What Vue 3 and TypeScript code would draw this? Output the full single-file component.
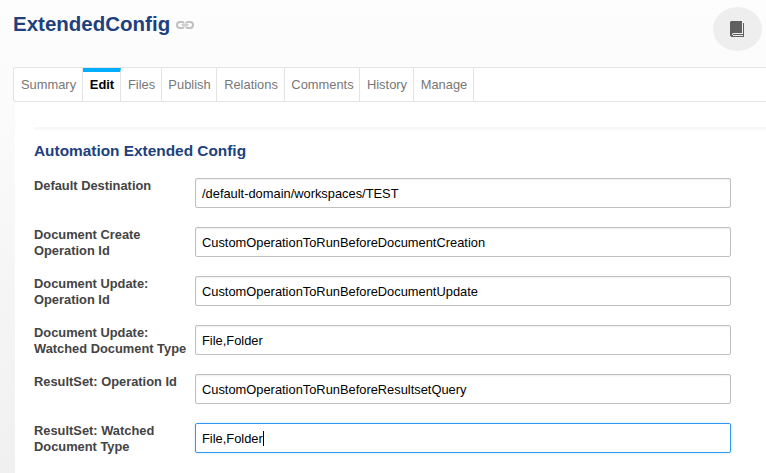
<script setup lang="ts">
import { onMounted, ref } from 'vue'

interface Tab {
  label: string
  width: number
}

interface Field {
  id: string
  lines: string[]
  value: string
}

const activeTab = ref('Edit')
const focused = ref('resultset-type')

const tabs: Tab[] = [
  { label: 'Summary', width: 69 },
  { label: 'Edit', width: 38 },
  { label: 'Files', width: 41 },
  { label: 'Publish', width: 55 },
  { label: 'Relations', width: 68 },
  { label: 'Comments', width: 75 },
  { label: 'History', width: 54 },
  { label: 'Manage', width: 60 },
]

const fields = ref<Field[]>([
  { id: 'destination', lines: ['Default Destination'], value: '/default-domain/workspaces/TEST' },
  { id: 'create-op', lines: ['Document Create', 'Operation Id'], value: 'CustomOperationToRunBeforeDocumentCreation' },
  { id: 'update-op', lines: ['Document Update:', 'Operation Id'], value: 'CustomOperationToRunBeforeDocumentUpdate' },
  { id: 'update-type', lines: ['Document Update:', 'Watched Document Type'], value: 'File,Folder' },
  { id: 'resultset-op', lines: ['ResultSet: Operation Id'], value: 'CustomOperationToRunBeforeResultsetQuery' },
  { id: 'resultset-type', lines: ['ResultSet: Watched', 'Document Type'], value: 'File,Folder' },
])

const ready = ref(false)
onMounted(() => {
  ready.value = true
})
</script>

<template>
  <div class="page">
    <header class="header">
      <h1 class="title">ExtendedConfig</h1>
      <svg class="link" width="18" height="8" viewBox="0 0 18 8" fill="none" stroke="#c0c0c0" stroke-width="2">
        <path d="M8 2.500C7.700 1.500 7 1 6 1H4C2 1 1 2.200 1 4s1 3 3 3h2c1 0 1.700-.5 2-1.500" />
        <path d="M10 2.500C10.300 1.500 11 1 12 1h2c2 0 3 1.200 3 3s-1 3-3 3h-2c-1 0-1.700-.5-2-1.500" />
        <path stroke-width="1.500" d="M5.500 4h7" />
      </svg>
      <button class="book" type="button" aria-label="Collections">
        <svg width="14" height="16" viewBox="0 0 14 16">
          <path fill="#606060" d="M1 0h11v12H2.500v2H12v-1h1V2h1v14H1.500L0 14.500V1z" />
          <path fill="#eee" d="M3 12h9v1H3zM2 13h1v1H2zM3 14h10v1H3z" />
          <path fill="#606060" d="M3 13h9v1H3z" />
        </svg>
      </button>
    </header>

    <nav class="tabs">
      <a
        v-for="tab in tabs"
        :key="tab.label"
        class="tab"
        :class="{ active: tab.label === activeTab }"
        :style="{ width: tab.width + 'px' }"
        @click="activeTab = tab.label"
      >{{ tab.label }}</a>
    </nav>

    <main class="content">
      <section class="panel">
        <h2 class="heading">Automation Extended Config</h2>
        <div v-for="field in fields" :key="field.id" class="row">
          <label class="label" :for="field.id">
            <span v-for="line in field.lines" :key="line">{{ line }}</span>
          </label>
          <div :id="field.id" class="input" :class="{ focus: field.id === focused }" @click="focused = field.id">
            <span>{{ field.value }}</span><i v-if="ready && field.id === focused" class="caret"></i>
          </div>
        </div>
      </section>
    </main>
  </div>
</template>

<style>
body {
  margin: 0;
  overflow: hidden;
}
</style>

<style scoped>
.page {
  box-sizing: border-box;
  display: flex;
  flex-direction: column;
  height: 473px;
  overflow: hidden;
  background: linear-gradient(#fdfdfd 0, #fbfbfb 100px, #f0f0f0 473px);
  font-family: "Liberation Sans", Arial, sans-serif;
  font-size: 13px;
}

.header {
  box-sizing: border-box;
  display: flex;
  align-items: flex-start;
  flex: none;
  height: 67px;
  padding: 7px 4px 0 13px;
}

.title {
  margin: 5px 0 0;
  color: #213f7d;
  font-size: 20.5px;
  line-height: 24px;
}

.link {
  margin: 14px 0 0 6px;
}

.book {
  display: flex;
  align-items: center;
  justify-content: center;
  width: 49px;
  height: 44px;
  margin-left: auto;
  padding: 0 2px 0 0;
  border: 0;
  border-radius: 50%;
  background: #eee;
}

.tabs {
  box-sizing: border-box;
  display: flex;
  flex: none;
  height: 35px;
  margin-left: 13px;
  border: 1px solid #e4e4e4;
  border-right: 0;
  border-radius: 3px 0 0 3px;
  background: #fff;
}

.tab {
  box-sizing: border-box;
  flex: none;
  padding-left: 1px;
  border-right: 1px solid #e4e4e4;
  color: #777;
  font-size: 12.9px;
  line-height: 34px;
  text-align: center;
  cursor: pointer;
}

.tab.active {
  border-top: 4px solid #00adff;
  color: #000;
  font-weight: bold;
  line-height: 26px;
}

.content {
  box-sizing: border-box;
  flex: 1;
  margin-left: 15px;
  padding: 25px 0 0 19px;
  background: #fff;
}

.panel {
  border-top: 3px solid #f8f8f8;
}

.heading {
  margin: 11px 0 18px;
  color: #213f7d;
  font-size: 15.4px;
  line-height: 19px;
}

.row {
  display: flex;
  align-items: flex-start;
  height: 49px;
}

.label {
  display: flex;
  flex-direction: column;
  width: 161px;
  color: #444;
  font-size: 12.87px;
  font-weight: bold;
  line-height: 16px;
  white-space: nowrap;
}

.input {
  box-sizing: border-box;
  display: flex;
  align-items: center;
  width: 536px;
  height: 30px;
  padding: 0 7px 0 6px;
  border: 1px solid #c0c0c0;
  border-radius: 2px;
  box-shadow: inset 0 1px 2px #eee;
  color: #000;
  background: #fff;
  font-size: 12.87px;
}

.input.focus {
  border-color: #2e98f5;
  box-shadow: 0 0 3px #cfe7ff;
}

.caret {
  width: 1px;
  height: 15px;
  background: #000;
}
</style>
